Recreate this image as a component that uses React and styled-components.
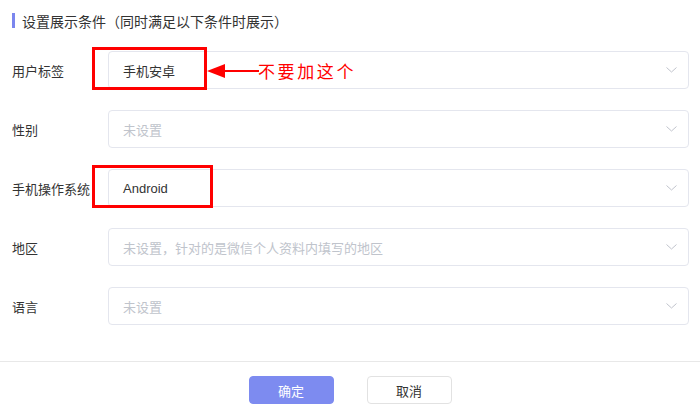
import React from "react";
import styled, { createGlobalStyle } from "styled-components";

const Global = createGlobalStyle`
  html, body { margin: 0; padding: 0; background: #fff; }
  body { font-family: "Liberation Sans", "Noto Sans CJK SC", sans-serif; }
`;

const Page = styled.div`
  position: relative;
  width: 700px;
  height: 407px;
  overflow: hidden;
  background: #fff;
`;

const Body = styled.div`
  padding: 0 11px 0 12px;
`;

const Title = styled.div`
  height: 41px;
  display: flex;
  align-items: center;
  gap: 7px;
  font-size: 14px;
  color: #333;
  &::before {
    content: "";
    width: 3px;
    height: 15px;
    background: #7b86ee;
  }
`;

const Form = styled.div`
  margin-top: 10px;
  display: flex;
  flex-direction: column;
  gap: 21px;
`;

const Row = styled.div`
  display: flex;
  align-items: center;
`;

const Label = styled.div`
  width: 96px;
  flex: 0 0 96px;
  font-size: 13px;
  color: #333;
  white-space: nowrap;
`;

const Select = styled.div`
  width: 582px;
  height: 38px;
  box-sizing: border-box;
  border: 1px solid #e4e6ee;
  border-radius: 4px;
  display: flex;
  align-items: center;
  justify-content: space-between;
  padding: 0 11px 0 14px;
  font-size: 13px;
  color: ${(p) => (p.$placeholder ? "#c0c4cc" : "#333")};
`;

const Footer = styled.div`
  margin-top: 36px;
  border-top: 1px solid #e8e8e8;
  padding-top: 14px;
  display: flex;
  justify-content: center;
  gap: 33px;
`;

const Button = styled.button`
  width: 85px;
  height: 28px;
  box-sizing: border-box;
  border-radius: 4px;
  font-family: inherit;
  font-size: 13px;
  padding: 0;
  border: 1px solid ${(p) => (p.$primary ? "#7d8bf0" : "#e2e2e2")};
  background: ${(p) => (p.$primary ? "#7d8bf0" : "#fff")};
  color: ${(p) => (p.$primary ? "#fff" : "#333")};
`;

const RedBox = styled.div`
  position: absolute;
  box-sizing: border-box;
  border: 3px solid #f00;
  left: ${(p) => p.$x}px;
  top: ${(p) => p.$y}px;
  width: ${(p) => p.$w}px;
  height: ${(p) => p.$h}px;
`;

const Arrow = styled.svg`
  position: absolute;
  left: 207px;
  top: 63px;
`;

const Note = styled.div`
  position: absolute;
  left: 258px;
  top: 61px;
  font-size: 17px;
  letter-spacing: 2.6px;
  color: #f00;
  font-family: "Noto Sans CJK SC", sans-serif;
  line-height: 20px;
`;

const Chevron = () => (
  <svg width="11" height="6" viewBox="0 0 11 6">
    <path d="M0.5 0.5 L5.5 5 L10.5 0.5" fill="none" stroke="#c0c4cc" strokeWidth="1" />
  </svg>
);

const rows = [
  { label: "用户标签", value: "手机安卓" },
  { label: "性别", value: "未设置", ph: true },
  { label: "手机操作系统", value: "Android" },
  { label: "地区", value: "未设置，针对的是微信个人资料内填写的地区", ph: true },
  { label: "语言", value: "未设置", ph: true },
];

export default function App() {
  return (
    <Page>
      <Global />
      <Body>
        <Title>设置展示条件（同时满足以下条件时展示）</Title>
        <Form>
          {rows.map((r) => (
            <Row key={r.label}>
              <Label>{r.label}</Label>
              <Select $placeholder={r.ph}>
                <span>{r.value}</span>
                <Chevron />
              </Select>
            </Row>
          ))}
        </Form>
      </Body>
      <Footer>
        <Button $primary>确定</Button>
        <Button>取消</Button>
      </Footer>
      <RedBox $x={92} $y={47} $w={115} $h={43} />
      <RedBox $x={92} $y={165} $w={121} $h={43} />
      <Arrow width="52" height="16" viewBox="0 0 52 16">
        <polygon points="0,8 18,1 18,15" fill="#f00" />
        <rect x="16" y="7" width="36" height="2" fill="#f00" />
      </Arrow>
      <Note>不要加这个</Note>
    </Page>
  );
}
